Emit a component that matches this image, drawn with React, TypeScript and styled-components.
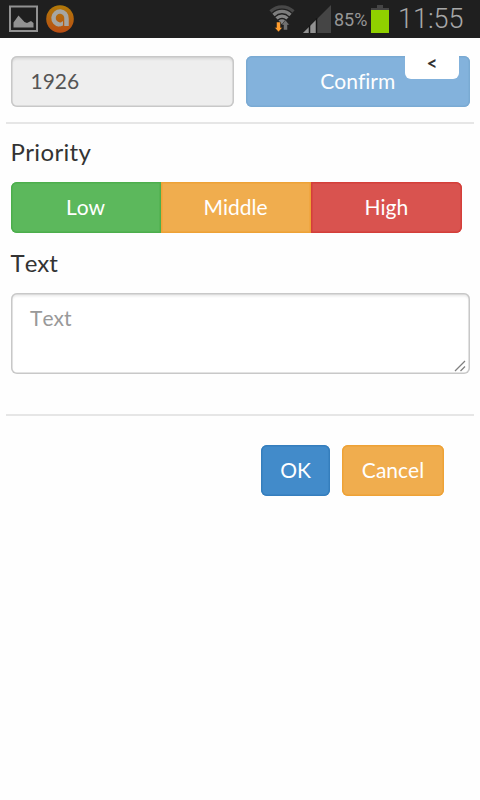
import React from 'react';
import styled, { createGlobalStyle } from 'styled-components';

const GlobalStyle = createGlobalStyle`
  * { box-sizing: border-box; }
  body {
    margin: 0;
    background: #fff;
    color: #333;
    font-family: Lato, "Liberation Sans", sans-serif;
  }
  body, input, button, textarea {
    font-kerning: none;
    font-variant-ligatures: none;
  }
`;

const Screen = styled.div`
  position: relative;
  width: 480px;
  height: 800px;
  overflow: hidden;
  background: #fefefe;
`;

const StatusBar = styled.header`
  display: flex;
  align-items: center;
  height: 38px;
  padding: 0 0 0 9px;
  background: #1f1f1f;
  color: #969696;
  font-family: Roboto, sans-serif;
`;

const StatusIcon = styled.svg<{ $left?: number }>`
  display: block;
  flex: none;
  margin-left: ${(p) => p.$left ?? 0}px;
`;

const Percent = styled.span`
  width: 33px;
  margin: 2px 0 0 3px;
  font-size: 18px;
  line-height: 20px;
  white-space: nowrap;
`;

const Clock = styled.time`
  width: 91px;
  padding-left: 9px;
  font-size: 27px;
  line-height: 38px;
  font-weight: 300;
  color: #a8a8a8;
  white-space: nowrap;
`;

const Spacer = styled.div`
  flex: 1;
`;

const Page = styled.main`
  padding: 18px 6px 0;
`;

const Row = styled.div`
  display: grid;
  grid-template-columns: 223.5px 223.5px;
  column-gap: 12px;
  padding-left: 4.5px;
`;

const Divider = styled.hr<{ $top: number }>`
  height: 2px;
  margin: ${(p) => p.$top}px 0 0;
  border: 0;
  background: #e6e6e6;
`;

const Field = styled.input`
  width: 100%;
  height: 51px;
  padding: 0 20px 2px;
  border: 0;
  border-radius: 6px;
  background: #eee;
  box-shadow: inset 0 0 0 1.5px #c8c8c8, inset 0 2.5px 2px 1px rgba(0, 0, 0, 0.075);
  color: #555;
  font-family: Lato, sans-serif;
  font-size: 21px;
  outline: 0;
`;

const tones = {
  primary: ['#428bca', '#357ebd'],
  success: ['#5cb85c', '#4cae4c'],
  warning: ['#f0ad4e', '#eea236'],
  danger: ['#d9534f', '#d43f3a'],
};

const Button = styled.button<{ $tone: keyof typeof tones; $width?: number }>`
  width: ${(p) => (p.$width ? `${p.$width}px` : '100%')};
  height: 51px;
  padding: 0 0 2px;
  border: 0;
  border-radius: 6px;
  background: ${(p) => tones[p.$tone][0]};
  box-shadow: inset 0 0 0 1.5px ${(p) => tones[p.$tone][1]};
  color: #fff;
  font-family: Lato, sans-serif;
  font-size: 21px;
  &:disabled { opacity: 0.65; }
`;

const ButtonGroup = styled.div`
  display: flex;
  margin: 15px 0 0 4.5px;
  & > button { border-radius: 0; }
  & > button:first-child { border-radius: 6px 0 0 6px; }
  & > button:last-child { border-radius: 0 6px 6px 0; }
`;

const Label = styled.h2<{ $top: number; $tracking?: number }>`
  height: 30px;
  margin: ${(p) => p.$top}px 0 0 4.5px;
  font-size: 24px;
  line-height: 30px;
  font-weight: 400;
  letter-spacing: ${(p) => p.$tracking ?? 0}px;
`;

const TextWrap = styled.div`
  position: relative;
  width: 459px;
  height: 81px;
  margin: 15px 0 0 4.5px;
`;

const TextArea = styled.textarea`
  display: block;
  width: 100%;
  height: 100%;
  padding: 9px 19.5px;
  border: 0;
  border-radius: 6px;
  background: #fff;
  box-shadow: inset 0 0 0 1.5px #c8c8c8, inset 0 2.5px 2px 1px rgba(0, 0, 0, 0.075);
  font-family: Lato, sans-serif;
  font-size: 21px;
  line-height: 32px;
  resize: none;
  outline: 0;
  &::placeholder { color: #999; opacity: 1; }
`;

const Grip = styled.svg`
  position: absolute;
  right: 4px;
  bottom: 2px;
`;

const Actions = styled.div`
  display: flex;
  justify-content: flex-end;
  gap: 12px;
  margin-top: 28.5px;
  padding-right: 30px;
`;

const BackTab = styled.button`
  position: absolute;
  top: 50px;
  left: 405px;
  width: 54px;
  height: 28.5px;
  padding: 0 0 2px;
  border: 0;
  border-radius: 6px;
  background: #fff;
  color: #333;
  font-family: Lato, sans-serif;
  font-size: 19px;
  font-weight: 700;
  line-height: 26px;
`;

export default function App() {
  return (
    <Screen>
      <GlobalStyle />
      <StatusBar>
        <StatusIcon width="29" height="28" viewBox="0 0 29 28">
          <rect x="1" y="1.5" width="27" height="24.5" fill="none" stroke="#929292" strokeWidth="2" />
          <path d="M4.5 22.5v-5l5-7 6 6.5 2.500 1 4-2 2.500 2v4.500z" fill="#929292" />
        </StatusIcon>
        <StatusIcon $left={8} width="28" height="28" viewBox="0 0 28 28">
          <defs>
            <linearGradient id="orb" x1="0" y1="0" x2="0" y2="1">
              <stop offset="0" stopColor="#b17a08" />
              <stop offset="1" stopColor="#b94d14" />
            </linearGradient>
          </defs>
          <circle cx="14" cy="14" r="13.8" fill="url(#orb)" />
          <path d="M13.5 19.5A6.500 6.500 0 1 1 20.5 13.500V21" fill="none" stroke="#a6a6a2" strokeWidth="4.500" />
          <path d="M14 21.500q-3-1-3-4.500 3 2 6-1v4.500z" fill="#a6a6a2" />
        </StatusIcon>
        <Spacer />
        <StatusIcon width="26" height="30" viewBox="0 0 26 30">
          <g fill="none" strokeWidth="3.2">
            <path d="M1.500 7.500A16.500 16.500 0 0 1 24.500 7.500" stroke="#484848" />
            <path d="M4.500 11A12 12 0 0 1 21.500 11" stroke="#7d7d7d" />
            <path d="M7.500 14.300A8 8 0 0 1 18.500 14.300" stroke="#858585" />
          </g>
          <path d="M9.500 16.500q3.500-2.500 7 0l-3.500 4z" fill="#858585" />
          <path d="M7.500 18h4v5.500h2l-4 4.500-4-4.500h2z" fill="#ff9d2e" stroke="#1f1f1f" strokeWidth="0.500" />
          <path d="M14.500 26v-5h-2l4-5 4 5h-2v5z" fill="#707070" stroke="#1f1f1f" strokeWidth="0.500" />
        </StatusIcon>
        <StatusIcon $left={8} width="28" height="28" viewBox="0 0 28 28">
          <path d="M0 28 28 0v28z" fill="#454545" />
          <path d="M0 28 13.500 14.500V28z" fill="#929292" />
          <path d="M6.500 20v8M13.500 13v15" stroke="#151515" strokeWidth="1.500" />
        </StatusIcon>
        <Percent>85%</Percent>
        <StatusIcon $left={4} width="18" height="28" viewBox="0 0 18 28">
          <path d="M6 0h6v3h6v3H0V3h6z" fill="#454545" />
          <path d="M0 5h18v23H0z" fill="#90d000" />
        </StatusIcon>
        <Clock>11:55</Clock>
      </StatusBar>
      <Page>
        <Row>
          <Field value="1926" readOnly />
          <Button $tone="primary" disabled>Confirm</Button>
        </Row>
        <Divider $top={15} />
        <Label $top={13} $tracking={0.35}>Priority</Label>
        <ButtonGroup>
          <Button $tone="success" $width={150}>Low</Button>
          <Button $tone="warning" $width={150}>Middle</Button>
          <Button $tone="danger" $width={151.5}>High</Button>
        </ButtonGroup>
        <Label $top={15}>Text</Label>
        <TextWrap>
          <TextArea placeholder="Text" />
          <Grip width="12" height="12" viewBox="0 0 12 12">
            <path d="M1 11 11 1M6.500 11 11 6.500" stroke="#808080" strokeWidth="1.300" />
          </Grip>
        </TextWrap>
        <Divider $top={40} />
        <Actions>
          <Button $tone="primary" $width={69}>OK</Button>
          <Button $tone="warning" $width={102}>Cancel</Button>
        </Actions>
      </Page>
      <BackTab>&lt;</BackTab>
    </Screen>
  );
}
